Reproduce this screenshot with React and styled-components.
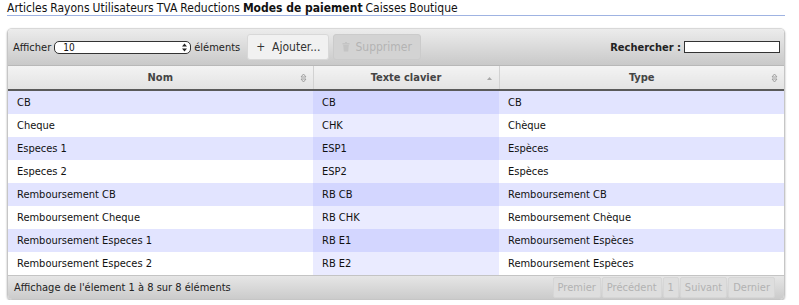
import React from "react";
import styled, { createGlobalStyle } from "styled-components";

const GlobalStyle = createGlobalStyle`
  body {
    margin: 0;
    background: #fff;
    font-family: "DejaVu Sans Condensed", "DejaVu Sans", sans-serif;
    color: #111;
  }
`;

const rows = [
  ["CB", "CB", "CB"],
  ["Cheque", "CHK", "Chèque"],
  ["Especes 1", "ESP1", "Espèces"],
  ["Especes 2", "ESP2", "Espèces"],
  ["Remboursement CB", "RB CB", "Remboursement CB"],
  ["Remboursement Cheque", "RB CHK", "Remboursement Chèque"],
  ["Remboursement Especes 1", "RB E1", "Remboursement Espèces"],
  ["Remboursement Especes 2", "RB E2", "Remboursement Espèces"],
];

const menu = ["Articles", "Rayons", "Utilisateurs", "TVA", "Reductions", "Modes de paiement", "Caisses", "Boutique"];

function SortBoth() {
  return (
    <svg width="7" height="10" viewBox="0 0 7 10">
      <path d="M1 4 L3.5 1 L6 4 Z M1 6 L3.5 9 L6 6 Z" fill="none" stroke="#9a9a9a" strokeWidth="0.9" />
    </svg>
  );
}

function SortAsc() {
  return (
    <svg width="7" height="6" viewBox="0 0 7 6">
      <path d="M1 5 L3.5 2 L6 5 Z" fill="#a8a8a8" />
    </svg>
  );
}

function Trash() {
  return (
    <svg width="8" height="10" viewBox="0 0 8 10">
      <rect x="0.5" y="1" width="7" height="1.5" fill="#c4c4c4" />
      <rect x="3" y="0" width="2" height="1.5" fill="#c4c4c4" />
      <path d="M1.2 3 H6.8 L6.2 9.5 H1.8 Z" fill="#c4c4c4" />
    </svg>
  );
}

function App() {
  return (
    <Page>
      <GlobalStyle />
      <Nav>
        {menu.map((m) => (
          <NavItem key={m} $active={m === "Modes de paiement"}>
            {m}
          </NavItem>
        ))}
      </Nav>
      <Wrapper>
        <Toolbar>
          <Label>Afficher</Label>
          <Select>
            <span>10</span>
            <SelectArrows>
              <svg width="5" height="9" viewBox="0 0 5 9">
                <path d="M0 3.5 L2.5 0.5 L5 3.5 Z M0 5.5 L2.5 8.5 L5 5.5 Z" fill="#222" />
              </svg>
            </SelectArrows>
          </Select>
          <Label>éléments</Label>
          <ToolButton>+ &nbsp;Ajouter...</ToolButton>
          <ToolButton $disabled>
            <Trash /> Supprimer
          </ToolButton>
          <Spacer />
          <Label $bold>Rechercher :</Label>
          <SearchInput />
        </Toolbar>
        <Table>
          <colgroup>
            <col style={{ width: 305 }} />
            <col style={{ width: 186 }} />
            <col />
          </colgroup>
          <thead>
            <tr>
              <Th>
                Nom
                <SortIcon>
                  <SortBoth />
                </SortIcon>
              </Th>
              <Th>
                Texte clavier
                <SortIcon>
                  <SortAsc />
                </SortIcon>
              </Th>
              <Th $last>
                Type
                <SortIcon>
                  <SortBoth />
                </SortIcon>
              </Th>
            </tr>
          </thead>
          <tbody>
            {rows.map((r, i) => (
              <tr key={i}>
                <Td $odd={i % 2 === 0}>{r[0]}</Td>
                <Td $odd={i % 2 === 0} $sorted>
                  {r[1]}
                </Td>
                <Td $odd={i % 2 === 0}>{r[2]}</Td>
              </tr>
            ))}
          </tbody>
        </Table>
        <Footer>
          <Info>Affichage de l'élement 1 à 8 sur 8 éléments</Info>
          <Pager>
            <PageButton>Premier</PageButton>
            <PageButton>Précédent</PageButton>
            <PageButton>1</PageButton>
            <PageButton>Suivant</PageButton>
            <PageButton>Dernier</PageButton>
          </Pager>
        </Footer>
      </Wrapper>
    </Page>
  );
}

const Page = styled.div`
  width: 778px;
  padding: 1px 0 0 7px;
`;

const Nav = styled.div`
  display: flex;
  gap: 3px;
  font-size: 12px;
  line-height: 14px;
  border-bottom: 1px solid #9fb3e2;
  margin-bottom: 12px;
`;

const NavItem = styled.span`
  font-weight: ${(p) => (p.$active ? "bold" : "normal")};
  color: #111;
`;

const Wrapper = styled.div`
  border-radius: 5px;
  box-shadow: 0 1px 2px rgba(0, 0, 0, 0.35);
  border: 1px solid #c6c6c6;
  border-top-color: #d8d8d8;
  overflow: hidden;
  font-size: 11px;
`;

const Toolbar = styled.div`
  height: 36px;
  display: flex;
  align-items: center;
  padding: 0 4px 0 5px;
  background: linear-gradient(#ececec, #c9c9c9);
  border-bottom: 1px solid #b8b8b8;
`;

const Label = styled.span`
  font-weight: ${(p) => (p.$bold ? "bold" : "normal")};
  color: #222;
  margin-right: 3px;
`;

const Select = styled.div`
  width: 124px;
  height: 11px;
  border: 1px solid #333;
  border-radius: 5px;
  background: #fff;
  display: flex;
  align-items: center;
  justify-content: space-between;
  padding: 0 3px 0 8px;
  font-size: 10px;
  margin-right: 3px;
`;

const SelectArrows = styled.span`
  display: flex;
  align-items: center;
`;

const ToolButton = styled.div`
  height: 24px;
  display: flex;
  align-items: center;
  gap: 5px;
  padding: 0 8px;
  margin-left: 4px;
  border-radius: 3px;
  font-size: 12px;
  color: ${(p) => (p.$disabled ? "#b4b4b4" : "#333")};
  background: ${(p) => (p.$disabled ? "#d3d3d3" : "#f1f1f1")};
  border: 1px solid ${(p) => (p.$disabled ? "#cbcbcb" : "#d8d8d8")};
`;

const Spacer = styled.div`
  flex: 1;
`;

const SearchInput = styled.div`
  width: 94px;
  height: 10px;
  border: 1px solid #333;
  background: #fff;
`;

const Table = styled.table`
  width: 100%;
  border-collapse: collapse;
  table-layout: fixed;
`;

const Th = styled.th`
  position: relative;
  height: 23px;
  padding: 0;
  font-weight: bold;
  color: #444;
  text-align: center;
  background: linear-gradient(#f3f3f3, #e3e3e3);
  border-right: ${(p) => (p.$last ? "none" : "1px solid #d2d2d2")};
  border-bottom: 2px solid #5a5a5a;
`;

const SortIcon = styled.span`
  position: absolute;
  right: 6px;
  top: 50%;
  transform: translateY(-50%);
  display: flex;
`;

const Td = styled.td`
  height: 23px;
  padding: 0 9px;
  color: #111;
  background: ${(p) =>
    p.$sorted ? (p.$odd ? "#d3d6ff" : "#eaebff") : p.$odd ? "#e2e4ff" : "#ffffff"};
`;

const Footer = styled.div`
  height: 23px;
  display: flex;
  align-items: center;
  justify-content: space-between;
  padding: 0 9px 0 6px;
  background: linear-gradient(#e6e6e6, #cbcbcb);
  border-top: 1px solid #c4c4c4;
`;

const Info = styled.span`
  color: #222;
`;

const Pager = styled.div`
  display: flex;
  gap: 1px;
  height: 21px;
`;

const PageButton = styled.span`
  display: flex;
  align-items: center;
  padding: 0 4px;
  color: #b2b2b2;
  border: 1px solid #d6d6d6;
  border-radius: 2px;
  background: #dedede;
`;

export default App;
